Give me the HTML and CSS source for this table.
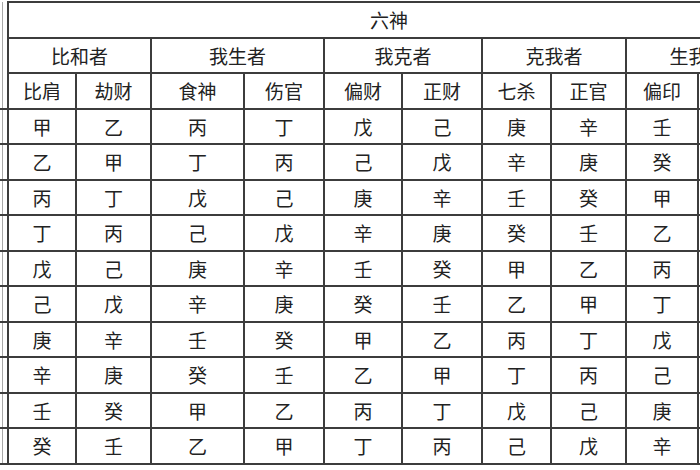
FILE: index.html
```html
<!DOCTYPE html>
<html lang="zh">
<head>
<meta charset="utf-8">
<title>六神</title>
<link rel="stylesheet" href="styles.css">
</head>
<body>
<table class="grid">
  <colgroup>
    <col class="c-edge">
    <col class="c1"><col class="c2"><col class="c3"><col class="c4"><col class="c5">
    <col class="c6"><col class="c7"><col class="c8"><col class="c9"><col class="c10">
  </colgroup>
  <tr class="r-head">
    <td class="edge edge-top" rowspan="3"></td>
    <td colspan="10" class="title">六神</td>
  </tr>
  <tr class="r-head">
    <td colspan="2">比和者</td>
    <td colspan="2">我生者</td>
    <td colspan="2">我克者</td>
    <td colspan="2">克我者</td>
    <td colspan="2">生我者</td>
  </tr>
  <tr class="r-head">
    <td>比肩</td><td>劫财</td><td>食神</td><td>伤官</td><td>偏财</td>
    <td>正财</td><td>七杀</td><td>正官</td><td>偏印</td><td>正印</td>
  </tr>
  <tr><td class="edge"></td><td>甲</td><td>乙</td><td>丙</td><td>丁</td><td>戊</td><td>己</td><td>庚</td><td>辛</td><td>壬</td><td>癸</td></tr>
  <tr><td class="edge"></td><td>乙</td><td>甲</td><td>丁</td><td>丙</td><td>己</td><td>戊</td><td>辛</td><td>庚</td><td>癸</td><td>壬</td></tr>
  <tr><td class="edge"></td><td>丙</td><td>丁</td><td>戊</td><td>己</td><td>庚</td><td>辛</td><td>壬</td><td>癸</td><td>甲</td><td>乙</td></tr>
  <tr><td class="edge"></td><td>丁</td><td>丙</td><td>己</td><td>戊</td><td>辛</td><td>庚</td><td>癸</td><td>壬</td><td>乙</td><td>甲</td></tr>
  <tr><td class="edge"></td><td>戊</td><td>己</td><td>庚</td><td>辛</td><td>壬</td><td>癸</td><td>甲</td><td>乙</td><td>丙</td><td>丁</td></tr>
  <tr><td class="edge"></td><td>己</td><td>戊</td><td>辛</td><td>庚</td><td>癸</td><td>壬</td><td>乙</td><td>甲</td><td>丁</td><td>丙</td></tr>
  <tr><td class="edge"></td><td>庚</td><td>辛</td><td>壬</td><td>癸</td><td>甲</td><td>乙</td><td>丙</td><td>丁</td><td>戊</td><td>己</td></tr>
  <tr><td class="edge"></td><td>辛</td><td>庚</td><td>癸</td><td>壬</td><td>乙</td><td>甲</td><td>丁</td><td>丙</td><td>己</td><td>戊</td></tr>
  <tr><td class="edge"></td><td>壬</td><td>癸</td><td>甲</td><td>乙</td><td>丙</td><td>丁</td><td>戊</td><td>己</td><td>庚</td><td>辛</td></tr>
  <tr><td class="edge"></td><td>癸</td><td>壬</td><td>乙</td><td>甲</td><td>丁</td><td>丙</td><td>己</td><td>戊</td><td>辛</td><td>庚</td></tr>
</table>
</body>
</html>
```
FILE: styles.css
```css
html, body {
  margin: 0;
  padding: 0;
  background: #ffffff;
  overflow: hidden;
}

.grid {
  border-collapse: collapse;
  table-layout: fixed;
  width: 790px;
  margin: 1px 0 0 -20px;
  font-family: "Noto Sans CJK SC", "Noto Sans CJK TC", sans-serif;
  font-size: 19px;
  color: #222222;
}

.c-edge { width: 28px; }
.c1 { width: 68px; }
.c2 { width: 75px; }
.c3 { width: 93px; }
.c4 { width: 80px; }
.c5 { width: 78px; }
.c6 { width: 80px; }
.c7 { width: 69px; }
.c8 { width: 75px; }
.c9 { width: 72px; }
.c10 { width: 72px; }

.grid td {
  border: 2px solid #3c3c3c;
  padding: 0;
  text-align: center;
  vertical-align: middle;
  height: 33.5px;
  line-height: 1;
  white-space: nowrap;
  overflow: hidden;
}

.grid .edge {
  border-left: none;
  background: linear-gradient(to right, transparent 22px, #a8a8a8 22px, #a8a8a8 23px, transparent 23px);
}

.grid .edge-top {
  border-top: none;
}
```
